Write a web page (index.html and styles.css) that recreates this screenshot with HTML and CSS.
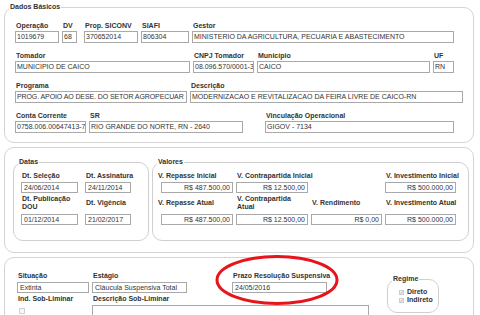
FILE: index.html
```html
<!DOCTYPE html>
<html lang="pt-BR">
<head>
<meta charset="utf-8">
<title>Dados Básicos</title>
<link rel="stylesheet" href="styles.css">
</head>
<body>
<div class="page">
  <fieldset class="panel p1">
    <legend>Dados Básicos</legend>
    <div class="p1-body">
      <div class="row">
        <div class="field f-op"><div class="lbl">Operação</div><div class="box">1019679</div></div>
        <div class="field f-dv"><div class="lbl">DV</div><div class="box b-dv">68</div></div>
        <div class="field f-prop"><div class="lbl">Prop. SICONV</div><div class="box">370652014</div></div>
        <div class="field f-siafi"><div class="lbl">SIAFI</div><div class="box">806304</div></div>
        <div class="field f-gestor"><div class="lbl">Gestor</div><div class="box">MINISTERIO DA AGRICULTURA, PECUARIA E ABASTECIMENTO</div></div>
      </div>
      <div class="row">
        <div class="field f-tomador"><div class="lbl">Tomador</div><div class="box">MUNICIPIO DE CAICO</div></div>
        <div class="field f-cnpj"><div class="lbl">CNPJ Tomador</div><div class="box">08.096.570/0001-35</div></div>
        <div class="field f-mun"><div class="lbl">Município</div><div class="box">CAICO</div></div>
        <div class="field f-uf"><div class="lbl">UF</div><div class="box">RN</div></div>
      </div>
      <div class="row">
        <div class="field f-prog"><div class="lbl">Programa</div><div class="box tight">PROG. APOIO AO DESE. DO SETOR AGROPECUAR</div></div>
        <div class="field f-desc"><div class="lbl">Descrição</div><div class="box">MODERNIZACAO E REVITALIZACAO DA FEIRA LIVRE DE CAICO-RN</div></div>
      </div>
      <div class="row">
        <div class="field f-cc"><div class="lbl">Conta Corrente</div><div class="box">0758.006.00647413-7</div></div>
        <div class="field f-sr"><div class="lbl">SR</div><div class="box">RIO GRANDE DO NORTE, RN - 2640</div></div>
        <div class="field f-vinc"><div class="lbl">Vinculação Operacional</div><div class="box">GIGOV - 7134</div></div>
      </div>
    </div>
  </fieldset>

  <fieldset class="panel p2">
    <div class="p2-body">
      <fieldset class="group datas">
        <legend>Datas</legend>
        <div class="grid datas-grid">
          <div class="field"><div class="lbl">Dt. Seleção</div><div class="box sm">24/06/2014</div></div>
          <div class="field"><div class="lbl">Dt. Assinatura</div><div class="box sm">24/11/2014</div></div>
          <div class="field"><div class="lbl tall"><span>Dt. Publicação<br>DOU</span></div><div class="box sm">01/12/2014</div></div>
          <div class="field"><div class="lbl tall"><span>Dt. Vigência</span></div><div class="box sm">21/02/2017</div></div>
        </div>
      </fieldset>
      <fieldset class="group valores">
        <legend>Valores</legend>
        <div class="grid valores-grid">
          <div class="field"><div class="lbl">V. Repasse Inicial</div><div class="box sm num first">R$ 487.500,00</div></div>
          <div class="field"><div class="lbl">V. Contrapartida Inicial</div><div class="box sm num">R$ 12.500,00</div></div>
          <div class="field"></div>
          <div class="field"><div class="lbl">V. Investimento Inicial</div><div class="box sm num">R$ 500.000,00</div></div>
          <div class="field"><div class="lbl tall"><span>V. Repasse Atual</span></div><div class="box sm num first">R$ 487.500,00</div></div>
          <div class="field"><div class="lbl tall"><span>V. Contrapartida<br>Atual</span></div><div class="box sm num">R$ 12.500,00</div></div>
          <div class="field"><div class="lbl tall"><span>V. Rendimento</span></div><div class="box sm num">R$ 0,00</div></div>
          <div class="field"><div class="lbl tall"><span>V. Investimento Atual</span></div><div class="box sm num">R$ 500.000,00</div></div>
        </div>
      </fieldset>
    </div>
  </fieldset>

  <fieldset class="panel p3">
    <div class="p3-body">
      <div class="p3-main">
        <div class="row">
          <div class="field f-sit"><div class="lbl">Situação</div><div class="box sm">Extinta</div></div>
          <div class="field f-est"><div class="lbl">Estágio</div><div class="box sm">Cláucula Suspensiva Total</div></div>
          <div class="field f-prazo"><div class="lbl">Prazo Resolução Suspensiva</div><div class="box sm">24/05/2016</div></div>
        </div>
        <div class="row">
          <div class="field f-ind"><div class="lbl">Ind. Sob-Liminar</div>
            <svg class="chk-ind" width="6" height="6" viewBox="0 0 6 6"><rect x="0.5" y="0.5" width="5" height="5" fill="#f7f7f7" stroke="#d0d0d0"/></svg>
          </div>
          <div class="field f-dsl"><div class="lbl">Descrição Sob-Liminar</div><div class="box area"></div></div>
        </div>
      </div>
      <fieldset class="group regime">
        <legend>Regime</legend>
        <div class="regime-body">
          <div class="opt"><svg width="5" height="5" viewBox="0 0 5 5"><rect x="0.5" y="0.5" width="4" height="4" fill="#f4f4f4" stroke="#cdcdcd"/><path d="M1.2 2.6 L2.1 3.5 L3.9 1.3" fill="none" stroke="#a8a8a8" stroke-width="0.8"/></svg><span>Direto</span></div>
          <div class="opt"><svg width="5" height="5" viewBox="0 0 5 5"><rect x="0.5" y="0.5" width="4" height="4" fill="#f4f4f4" stroke="#cdcdcd"/><path d="M1.2 2.6 L2.1 3.5 L3.9 1.3" fill="none" stroke="#a8a8a8" stroke-width="0.8"/></svg><span>Indireto</span></div>
        </div>
      </fieldset>
    </div>
  </fieldset>

  <svg class="annot" width="130" height="60" viewBox="0 0 130 60"><ellipse cx="65" cy="30" rx="60" ry="23.5" fill="none" stroke="#e8141c" stroke-width="3"/></svg>
</div>
</body>
</html>
```
FILE: styles.css
```css
html, body {
  margin: 0;
  padding: 0;
  overflow: hidden;
  background: #fff;
}
body {
  font-family: "Liberation Sans", Arial, sans-serif;
  font-size: 7px;
  color: #333;
}
.page {
  position: relative;
  width: 470px;
  padding: 3px 0 0 4px;
}
fieldset {
  margin: 0;
  padding: 0;
  min-width: 0;
  box-sizing: border-box;
}
legend {
  font-weight: bold;
  line-height: 8px;
  padding: 0 1px;
  margin-left: 4px;
  color: #333;
}
.panel {
  border: 1px solid #d4d4d4;
  border-radius: 10px;
  width: 470px;
}
.panel + .panel {
  margin-top: 4px;
}
.group {
  border: 1px solid #cfcfcf;
  border-radius: 10px;
}
.row {
  display: flex;
  gap: 3px;
}
.field {
  display: flex;
  flex-direction: column;
  flex: none;
}
.lbl {
  font-weight: bold;
  line-height: 8px;
  height: 8px;
  white-space: nowrap;
  padding-left: 1px;
  margin-bottom: 1px;
}
.lbl.tall {
  height: 16px;
  display: flex;
  align-items: center;
  margin-bottom: 3px;
}
.box {
  box-sizing: border-box;
  height: 12px;
  border: 1px solid #a9a9a9;
  padding: 0 1px;
  line-height: 10px;
  white-space: nowrap;
  overflow: hidden;
  background: #fff;
}
.box.tight {
  letter-spacing: -0.1px;
}
.box.sm {
  height: 11px;
  line-height: 9px;
  padding: 0 2px;
}
.box.num {
  text-align: right;
}

/* Panel 1 */
.p1-body {
  padding: 11px 0 9px 10px;
  display: flex;
  flex-direction: column;
  gap: 9px;
}
.f-op { width: 44px; }
.f-dv { width: 19px; }
.b-dv { width: 15px; }
.f-prop { width: 54px; }
.f-siafi { width: 48px; }
.f-gestor { width: 262px; }
.f-tomador { width: 175px; }
.f-cnpj { width: 61px; }
.f-mun { width: 173px; }
.f-uf { width: 21px; }
.f-prog { width: 172px; }
.f-desc { width: 273px; }
.f-cc { width: 71px; }
.f-sr { width: 154px; }
.f-vinc { width: 189px; margin-left: 19px; }

/* Panel 2 */
.p2-body {
  padding: 10px 4px 11px 8px;
  display: flex;
  gap: 3px;
}
.datas { width: 136px; }
.valores { width: 317px; }
.grid {
  display: grid;
  row-gap: 2px;
}
.grid .lbl {
  margin-bottom: 2px;
}
.grid .lbl.tall {
  margin-bottom: 3px;
}
.datas-grid {
  padding: 6px 0 15px 7px;
  grid-template-columns: 57px 46px;
  column-gap: 7px;
}
.valores-grid {
  padding: 6px 0 15px 4px;
  grid-template-columns: 76px 72px 71px 71px;
  column-gap: 3px;
}
.box.first {
  margin-left: 4px;
}

/* Panel 3 */
.p3-body {
  padding: 14px 0 10px 12px;
  display: flex;
  align-items: flex-start;
}
.p3-main {
  display: flex;
  flex-direction: column;
  gap: 2px;
}
.p3-main .lbl {
  margin-bottom: 2px;
}
.f-sit { width: 72px; }
.f-est { width: 95px; }
.f-prazo { width: 95px; margin-left: 42px; }
.f-ind { width: 72px; }
.f-dsl { width: 277px; }
.chk-ind {
  display: block;
  margin: 3px 0 0 2px;
}
.box.area {
  height: 26px;
}
.regime {
  width: 52px;
  margin: 3px 0 0 18px;
}
.regime-body {
  padding: 5px 0 8px 11px;
}
.opt {
  display: flex;
  align-items: center;
  gap: 3px;
  height: 8px;
  line-height: 8px;
  font-weight: bold;
  white-space: nowrap;
}
.opt svg {
  display: block;
  flex: none;
}

.annot {
  position: absolute;
  left: 212px;
  top: 250px;
}
```
